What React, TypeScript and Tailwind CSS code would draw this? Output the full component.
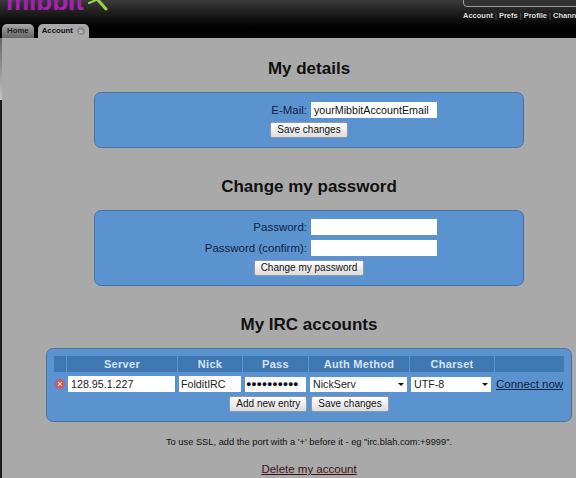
import { Fragment } from 'react'

const font = { fontFamily: '"Liberation Sans", Arial, sans-serif' }

const topLinks = ['Account', 'Prefs', 'Profile', 'Channels']

const ircHeads = [
  { label: '', w: 'w-[12px]' },
  { label: 'Server', w: 'w-[110px]' },
  { label: 'Nick', w: 'w-[64px]' },
  { label: 'Pass', w: 'w-[65px]' },
  { label: 'Auth Method', w: 'w-[100px]' },
  { label: 'Charset', w: 'w-[84px]' },
  { label: '', w: 'w-[69px]' },
]

function Btn({ children }: { children: string }) {
  return (
    <button
      type="button"
      className="h-[16px] rounded-[2px] border border-[#8f9aa6] bg-gradient-to-b from-[#ffffff] to-[#dcdcdc] px-[6px] text-[10px] leading-[14px] text-[#111]"
    >
      {children}
    </button>
  )
}

function FormRow({ label, value }: { label: string; value?: string }) {
  return (
    <div className="flex w-full items-center">
      <span className="w-[216px] pr-[4px] text-right text-[11.5px] leading-[16px] text-[#10233c]">{label}</span>
      <div className="h-[16px] w-[126px] bg-white pl-[3px] text-[10.7px] leading-[16px] text-[#111]">{value}</div>
    </div>
  )
}

function Select({ value, w }: { value: string; w: string }) {
  return (
    <div className={`flex h-[15px] items-center justify-between bg-white pl-[3px] pr-[3px] text-[10.7px] text-[#222] ${w}`}>
      <span>{value}</span>
      <span className="h-0 w-0 border-x-[3px] border-t-[3px] border-x-transparent border-t-[#111]" />
    </div>
  )
}

export default function App() {
  return (
    <div style={font} className="relative h-[478px] w-[576px] overflow-hidden bg-[#a9a9a9]">
      {/* top bar */}
      <header className="relative h-[38px] bg-gradient-to-b from-[#3a3a3a] via-[#111] via-50% to-black">
        <span className="absolute left-[6px] top-[-12px] text-[26px] font-bold leading-[26px] text-[#a81fb5]">mibbit</span>
        <svg className="absolute left-[86px] top-0" width="24" height="12" viewBox="0 0 24 12">
          <path d="M11 -1 L20 9" stroke="#9fd04a" strokeWidth="3" strokeLinecap="round" fill="none" />
          <path d="M3 3 L10 0" stroke="#9fd04a" strokeWidth="2" strokeLinecap="round" fill="none" />
        </svg>
        <div className="absolute left-[463px] top-[-8px] h-[15px] w-[130px] rounded-[4px] border border-[#999] bg-[#333]" />
        <nav className="absolute left-[463px] top-[10px] flex whitespace-nowrap text-[7.5px] font-bold leading-[11px] text-[#ddd]">
          {topLinks.map((l, i) => (
            <Fragment key={l}>
              {i > 0 && <span className="mx-[2px] font-normal text-[#666]">|</span>}
              <span>{l}</span>
            </Fragment>
          ))}
        </nav>
        {/* tabs */}
        <div className="absolute bottom-0 left-[2px] flex items-end gap-[4px] text-[7.8px] font-bold">
          <div className="h-[14px] rounded-t-[5px] bg-gradient-to-b from-[#a8a8a8] to-[#666] px-[5px] leading-[14px] text-[#222]">Home</div>
          <div className="flex h-[14px] items-center gap-[4px] rounded-t-[5px] bg-[#a9a9a9] pl-[4px] pr-[4px] text-[#111]">
            Account
            <span className="flex h-[8px] w-[8px] items-center justify-center rounded-full bg-[#8c8c8c] text-[7px] leading-none text-[#ccc]">×</span>
          </div>
        </div>
      </header>

      {/* edge of the window behind */}
      <div className="absolute left-0 top-[38px] h-[62px] w-[2px] bg-gradient-to-b from-[#666] to-[#c4c4c4]" />
      <div className="absolute bottom-0 left-0 top-[100px] w-[2px] bg-[#1c1c1a]" />

      <main className="flex flex-col items-center">
        <h2 className="ml-[42px] mt-[21px] text-[17px] font-bold leading-[20px] text-[#111]">My details</h2>
        <section className="ml-[42px] mt-[13px] flex h-[56px] w-[430px] flex-col items-center gap-[4px] rounded-[7px] border border-[#4a72a3] bg-[#5b93d0] pt-[9px]">
          <FormRow label="E-Mail:" value="yourMibbitAccountEmail" />
          <Btn>Save changes</Btn>
        </section>

        <h2 className="ml-[42px] mt-[29px] text-[17px] font-bold leading-[20px] text-[#111]">Change my password</h2>
        <section className="ml-[42px] mt-[13px] flex h-[76px] w-[430px] flex-col items-center rounded-[7px] border border-[#4a72a3] bg-[#5b93d0] pt-[8px]">
          <div className="flex w-full flex-col gap-[5px]">
            <FormRow label="Password:" />
            <FormRow label="Password (confirm):" />
          </div>
          <div className="mt-[4px] flex">
            <Btn>Change my password</Btn>
          </div>
        </section>

        <h2 className="ml-[42px] mt-[29px] text-[17px] font-bold leading-[20px] text-[#111]">My IRC accounts</h2>
        <section className="ml-[42px] mt-[13px] flex h-[74px] w-[526px] flex-col rounded-[7px] border border-[#4a72a3] bg-[#5b93d0] pl-[7px] pt-[7px]">
          <div className="flex gap-[1px]">
            {ircHeads.map((h, i) => (
              <div
                key={i}
                className={`h-[16px] bg-[#3f78b2] text-center text-[11px] font-bold leading-[16px] tracking-[0.3px] text-[#d5e3f2] ${h.w}`}
              >
                {h.label}
              </div>
            ))}
          </div>
          <div className="mt-[4px] flex items-center">
            <span className="ml-[1px] flex h-[10px] w-[10px] items-center justify-center rounded-full bg-[#cf5a5a] text-[9px] leading-none text-white">×</span>
            <div className="ml-[3px] h-[16px] w-[107px] bg-white pl-[3px] text-[10.7px] leading-[16px] text-[#222]">128.95.1.227</div>
            <div className="ml-[4px] h-[16px] w-[62px] bg-white pl-[2px] text-[10.7px] leading-[16px] text-[#222]">FolditIRC</div>
            <div className="ml-[4px] h-[15px] w-[61px] overflow-hidden bg-white pl-[1px] text-[9px] leading-[15px] tracking-[-0.2px] text-[#111]">●●●●●●●●●●</div>
            <div className="ml-[4px]">
              <Select value="NickServ" w="w-[97px]" />
            </div>
            <div className="ml-[4px]">
              <Select value="UTF-8" w="w-[80px]" />
            </div>
            <a className="ml-[5px] whitespace-nowrap text-[11.5px] leading-[16px] text-[#10233c] underline">Connect now</a>
          </div>
          <div className="mt-[4px] flex justify-center gap-[4px] pr-[7px]">
            <Btn>Add new entry</Btn>
            <Btn>Save changes</Btn>
          </div>
        </section>

        <p className="ml-[42px] mt-[14px] text-[9.3px] leading-[12px] text-[#111]">
          To use SSL, add the port with a '+' before it - eg "irc.blah.com:+9999".
        </p>
        <a className="ml-[42px] mt-[14px] text-[11.5px] leading-[14px] text-[#3d1414] underline">Delete my account</a>
      </main>
    </div>
  )
}
